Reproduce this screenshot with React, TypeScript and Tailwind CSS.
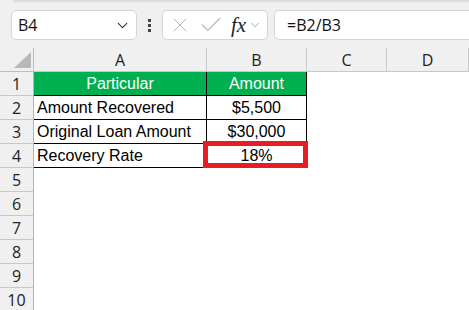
import { ChevronDown, X, Check } from "lucide-react";

const rowNums = [1, 2, 3, 4, 5, 6, 7, 8, 9, 10];

const data: Record<number, [string, string]> = {
  1: ["Particular", "Amount"],
  2: ["Amount Recovered", "$5,500"],
  3: ["Original Loan Amount", "$30,000"],
  4: ["Recovery Rate", "18%"],
};

function Toolbar() {
  return (
    <div className="relative h-[48px] bg-[#f0f0f0] flex items-start pt-[10px]">
      <div className="absolute left-[13px] right-0 top-0 h-[3px] bg-gradient-to-b from-[#d6d6d6] to-[#f0f0f0]" />
      <div className="ml-[11px] w-[126px] h-[30px] bg-white border border-[#d4d4d4] rounded-[5px] flex items-center justify-between pl-[6px] pr-[5px]">
        <span className="text-[16px] text-[#111] font-['Open_Sans',sans-serif]">B4</span>
        <ChevronDown size={17} strokeWidth={1.6} className="text-[#333]" />
      </div>
      <div className="w-[25px] h-[30px] flex flex-col items-center justify-center gap-[2px]">
        <div className="w-[3px] h-[3px] bg-[#444]" />
        <div className="w-[3px] h-[3px] bg-[#444]" />
        <div className="w-[3px] h-[3px] bg-[#444]" />
      </div>
      <div className="w-[106px] h-[30px] bg-white border border-[#d4d4d4] rounded-[5px] flex items-center pl-[5px]">
        <X size={24} strokeWidth={1} className="text-[#b4b4b4]" />
        <Check size={26} strokeWidth={1} className="text-[#b4b4b4] ml-[6px]" />
        <span className="ml-[7px] text-[21px] italic font-medium text-[#222] font-['Liberation_Serif',serif] leading-none">fx</span>
        <ChevronDown size={14} strokeWidth={1.4} className="text-[#999] ml-[2px]" />
      </div>
      <div className="ml-[6px] flex-1 h-[30px] bg-white border border-[#d4d4d4] border-r-0 rounded-l-[5px] flex items-center pl-[12px]">
        <span className="text-[16px] text-[#111] font-['Open_Sans',sans-serif]">=B2/B3</span>
      </div>
    </div>
  );
}

function Corner() {
  return (
    <div className="h-[24px] bg-[#f0f0f0] border-r border-b border-[#bdbdbd] flex items-end justify-end pr-[2px] pb-[3px]">
      <svg width="17" height="16" viewBox="0 0 17 16">
        <polygon points="17,0 17,16 0,16" fill="#b8b8b8" />
      </svg>
    </div>
  );
}

function ColHead({ label }: { label: string }) {
  return (
    <div className="h-[24px] bg-[#f0f0f0] border-r border-b border-[#c8c8c8] flex items-center justify-center text-[16px] text-[#222] font-['Open_Sans',sans-serif]">
      {label}
    </div>
  );
}

export default function App() {
  return (
    <div className="w-[469px] h-[310px] overflow-hidden bg-white font-['Liberation_Sans',sans-serif]">
      <Toolbar />
      <div className="grid grid-cols-[34px_173px_100px_80px_1fr]">
        <Corner />
        <ColHead label="A" />
        <ColHead label="B" />
        <ColHead label="C" />
        <ColHead label="D" />
        {rowNums.map((n) => {
          const row = data[n];
          const head = n === 1;
          return (
            <div key={n} className="contents">
              <div className="h-[24px] bg-[#f0f0f0] border-r border-[#b4b4b4] border-b border-b-[#c8c8c8] flex items-center justify-center text-[16px] text-[#222] font-['Open_Sans',sans-serif]">
                {n}
              </div>
              {row ? (
                <>
                  <div
                    className={`h-[24px] border-r border-b border-black flex items-center text-[16px] ${
                      head ? "bg-[#00b050] text-white justify-center" : "text-black pl-[3px]"
                    }`}
                  >
                    {row[0]}
                  </div>
                  <div
                    className={`relative h-[24px] border-r border-b border-black flex items-center justify-center text-[16px] ${
                      head ? "bg-[#00b050] text-white" : "text-black"
                    }`}
                  >
                    {row[1]}
                    {n === 4 && (
                      <div className="absolute left-[-4px] top-[-3px] right-[-2px] bottom-[-1px] border-[5px] border-[#e81c24]" />
                    )}
                  </div>
                </>
              ) : (
                <>
                  <div className="h-[24px]" />
                  <div className="h-[24px]" />
                </>
              )}
              <div className="h-[24px]" />
              <div className="h-[24px]" />
            </div>
          );
        })}
      </div>
    </div>
  );
}
